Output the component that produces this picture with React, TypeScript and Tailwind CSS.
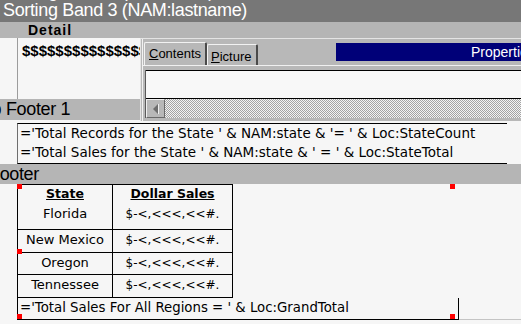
const dollar = "$-<,<<<,<<#.";

const rows = [
  { state: "New Mexico", h: "h-[23px]" },
  { state: "Oregon", h: "h-[22px]" },
  { state: "Tennessee", h: "h-[23px]" },
];

const Handle = ({ pos }: { pos: string }) => (
  <div className={`absolute w-[5px] h-[5px] bg-[#ff0000] ${pos}`} />
);

const App = () => {
  return (
    <div className="relative w-[521px] h-[324px] overflow-hidden bg-[#f6f6f6] text-black font-['Liberation_Sans',Arial,sans-serif]">
      {/* sorting band title */}
      <div className="h-[22px] bg-[#777777] overflow-hidden flex flex-col justify-end pb-[2px] pl-[3px] text-white text-[18px] tracking-[-0.35px] leading-[19px] whitespace-nowrap">
        <div>Sorting Band 2 (NAM:state)</div>
        <div>Sorting Band 3 (NAM:lastname)</div>
      </div>

      {/* detail */}
      <div className="h-[16px] bg-[#b5b5b5] pl-[28px] text-[14px] font-bold tracking-[1px] leading-[16px]">
        Detail
      </div>
      <div className="h-[61px] flex">
        <div className="w-[18px] shrink-0 border-r border-[#9c9c9c]" />
        <div className="pl-[4px] pt-[5px] text-[15px] font-bold leading-[16px] whitespace-nowrap">
          $$$$$$$$$$$$$$$
        </div>
      </div>

      {/* group footer 1 */}
      <div className="h-[21px] bg-[#b5b5b5] overflow-hidden whitespace-nowrap">
        <div className="ml-[-47px] text-[18px] tracking-[-0.35px] leading-[21px]">Group Footer 1</div>
      </div>
      <div className="h-[44px] flex font-['DejaVu_Sans',sans-serif] text-[13.5px]">
        <div className="w-[17px] shrink-0" />
        <div className="w-[490px] mt-[3px] h-[41px] border-t border-b border-l border-black border-l-[#6e6e6e] pl-[2px] leading-[19px] whitespace-nowrap">
          <div>='Total Records for the State ' &amp; NAM:state &amp; '= ' &amp; Loc:StateCount</div>
          <div>='Total Sales for the State ' &amp; NAM:state &amp; ' = ' &amp; Loc:StateTotal</div>
        </div>
      </div>

      {/* report footer */}
      <div className="h-[20px] bg-[#b5b5b5] overflow-hidden whitespace-nowrap">
        <div className="ml-[-11px] text-[18px] tracking-[-0.35px] leading-[20px]">Footer</div>
      </div>
      <div className="pl-[17px] font-['DejaVu_Sans',sans-serif] text-[13px]">
        <div className="w-[216px] grid grid-cols-[95px_120px] border-l border-t border-black">
          <div className="h-[18px] border-r border-black text-center font-bold underline text-[12.5px] leading-[17px]">State</div>
          <div className="h-[18px] border-r border-black text-center font-bold underline text-[12.5px] leading-[17px]">Dollar Sales</div>
          <div className="h-[27px] border-r border-b border-black text-center pt-[3px] leading-[16px]">Florida</div>
          <div className="h-[27px] border-r border-b border-black text-center pt-[3px] leading-[16px] text-[12px]">{dollar}</div>
          {rows.map((r) => (
            <>
              <div key={r.state} className={`${r.h} border-r border-b border-black text-center pt-[2px] leading-[16px]`}>{r.state}</div>
              <div key={r.state + "-d"} className={`${r.h} border-r border-b border-black text-center pt-[2px] leading-[16px] text-[12px]`}>{dollar}</div>
            </>
          ))}
        </div>
        <div className="flex">
          <div className="w-[442px] h-[22px] border-l border-r border-b border-black pl-[2px] pt-[2px] leading-[16px] text-[13.3px] whitespace-nowrap">
            ='Total Sales For All Regions = ' &amp; Loc:GrandTotal
          </div>
          <div className="flex-1 h-[22px] border-b border-[#c4c4c4]" />
        </div>
      </div>

      {/* selection handles */}
      <Handle pos="left-[17px] top-[184px]" />
      <Handle pos="left-[17px] top-[249px]" />
      <Handle pos="left-[17px] top-[314px]" />
      <Handle pos="left-[450px] top-[184px]" />
      <Handle pos="left-[450px] top-[314px]" />

      {/* properties window */}
      <div className="absolute left-[140px] top-[38px] w-[381px] h-[83px] bg-[#b8b8b8] border-l border-t border-[#e4e4e4]">
        <div className="h-full ml-[1px] border-l border-[#f2f2f2] flex flex-col">
          <div className="h-[26px] flex items-end pl-[1px] text-[13px] whitespace-nowrap">
            <div className="w-[63px] h-[23px] shrink-0 rounded-t-[2px] border-t border-l border-[#f2f2f2] border-r-2 border-r-[#4a4a4a] pl-[4px] pt-[3px] leading-[15px]">
              <span className="underline">C</span>ontents
            </div>
            <div className="w-[51px] h-[21px] shrink-0 rounded-t-[2px] border-t border-l border-[#f2f2f2] border-r-2 border-r-[#4a4a4a] pl-[3px] pt-[4px] leading-[15px]">
              <span className="underline">P</span>icture
            </div>
            <div className="self-start mt-[4px] ml-[78px] flex-1 h-[18px] bg-[#000078] overflow-hidden pl-[135px] text-white text-[14px] leading-[18px]">
              Properties
            </div>
          </div>
          <div className="flex-1 border-t border-[#f0f0f0] pl-[2px] pt-[4px]">
            <div className="border-l border-[#5a5a5a]">
              <div className="h-[29px] bg-[#f8f8f8] border-t border-b border-black" />
              <div className="h-[19px] flex">
                <div className="w-[19px] shrink-0 bg-[#b8b8b8] border-t border-l border-[#f0f0f0] border-r border-b border-r-[#6a6a6a] border-b-[#6a6a6a] flex items-center justify-center">
                  <svg width="6" height="10" viewBox="0 0 6 10">
                    <polygon points="5,0 5,10 0,5" fill="#6e6e6e" />
                    <line x1="5.5" y1="0" x2="5.5" y2="10" stroke="#f0f0f0" strokeWidth="1" />
                  </svg>
                </div>
                <div className="flex-1 bg-[repeating-conic-gradient(#f4f4f4_0%_25%,#a4a4a4_0%_50%)] bg-[length:2px_2px]" />
              </div>
            </div>
          </div>
        </div>
      </div>
    </div>
  );
};

export default App;
